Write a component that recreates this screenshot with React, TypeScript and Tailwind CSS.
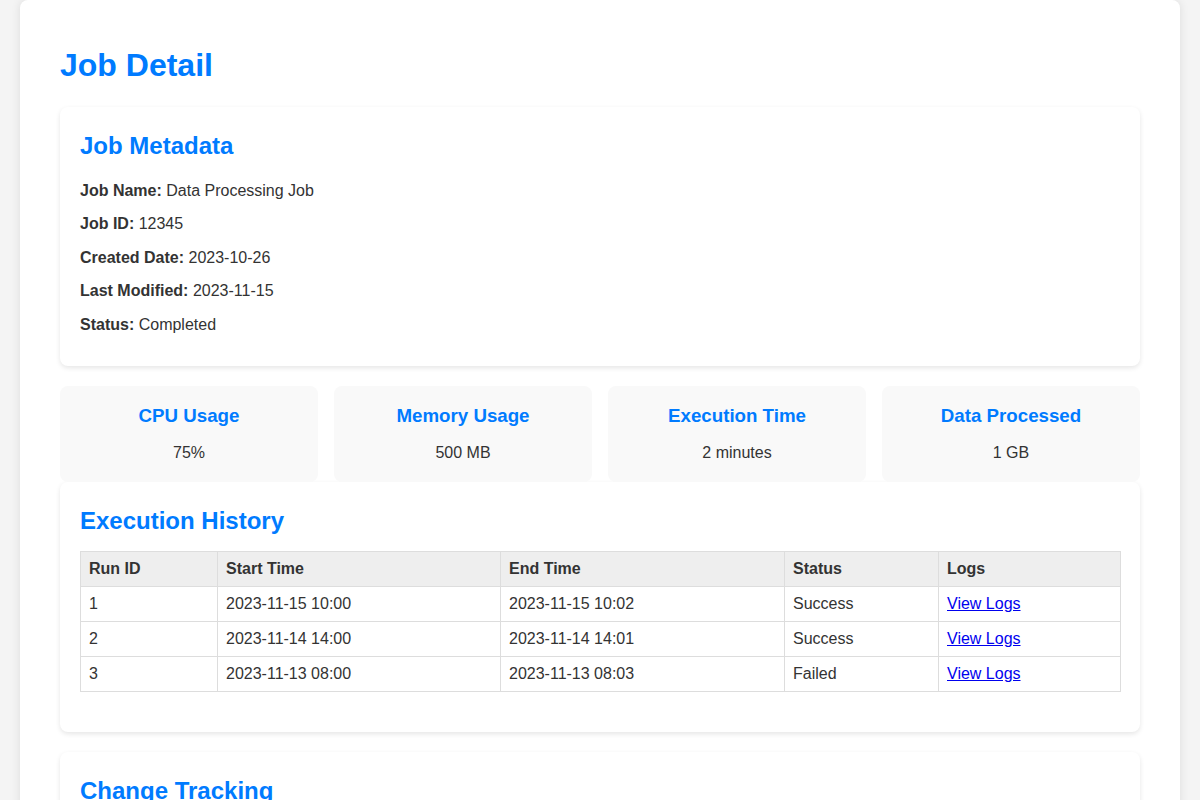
import React from "react";

const meta = [
  ["Job Name:", "Data Processing Job"],
  ["Job ID:", "12345"],
  ["Created Date:", "2023-10-26"],
  ["Last Modified:", "2023-11-15"],
  ["Status:", "Completed"],
];

const metrics = [
  ["CPU Usage", "75%"],
  ["Memory Usage", "500 MB"],
  ["Execution Time", "2 minutes"],
  ["Data Processed", "1 GB"],
];

const runs = [
  ["1", "2023-11-15 10:00", "2023-11-15 10:02", "Success"],
  ["2", "2023-11-14 14:00", "2023-11-14 14:01", "Success"],
  ["3", "2023-11-13 08:00", "2023-11-13 08:03", "Failed"],
];

export default function App() {
  return (
    <div
      className="min-h-screen bg-[#f4f4f4] px-5 text-[#333] leading-[1.6]"
      style={{ fontFamily: '"Liberation Sans", Arial, sans-serif' }}
    >
      <div className="bg-white rounded-lg p-10 shadow-[0_0_10px_rgba(0,0,0,0.1)]">
        <h1 className="text-[32px] font-bold text-[#007bff] mb-4 leading-[1.6]">Job Detail</h1>

        <section className="bg-white rounded-lg p-5 shadow-[0_2px_5px_rgba(0,0,0,0.1)] mb-5">
          <h2 className="text-[24px] font-bold text-[#007bff] mb-3 leading-[1.6]">Job Metadata</h2>
          <div className="flex flex-col gap-2 pb-2">
            {meta.map(([k, v]) => (
              <p key={k} className="text-[16px] leading-[25.6px]">
                <strong className="font-bold">{k}</strong> {v}
              </p>
            ))}
          </div>
        </section>

        <div className="grid grid-cols-4 gap-4">
          {metrics.map(([t, v]) => (
            <div key={t} className="bg-[#f9f9f9] rounded-lg px-4 pt-[15px] pb-[17px] text-center">
              <h3 className="text-[18.72px] font-bold text-[#007bff] leading-[30px] mb-[9px]">{t}</h3>
              <p className="text-[16px] leading-[25.6px]">{v}</p>
            </div>
          ))}
        </div>

        <section className="bg-white rounded-lg p-5 shadow-[0_2px_5px_rgba(0,0,0,0.1)] mb-5">
          <h2 className="text-[24px] font-bold text-[#007bff] mb-[10px] leading-[1.6]">Execution History</h2>
          <table className="w-full border-collapse table-fixed text-[16px] leading-[18px] mb-5">
            <colgroup>
              <col className="w-[137px]" />
              <col className="w-[283px]" />
              <col className="w-[284px]" />
              <col className="w-[154px]" />
              <col className="w-[182px]" />
            </colgroup>
            <thead>
              <tr className="bg-[#eeeeee]">
                {["Run ID", "Start Time", "End Time", "Status", "Logs"].map((h) => (
                  <th key={h} className="border border-[#dddddd] p-2 text-left font-bold">
                    {h}
                  </th>
                ))}
              </tr>
            </thead>
            <tbody>
              {runs.map((r) => (
                <tr key={r[0]}>
                  {r.map((c, i) => (
                    <td key={i} className="border border-[#dddddd] p-2">
                      {c}
                    </td>
                  ))}
                  <td className="border border-[#dddddd] p-2">
                    <a href="#" className="text-[#0000ee] underline">
                      View Logs
                    </a>
                  </td>
                </tr>
              ))}
            </tbody>
          </table>
        </section>

        <section className="bg-white rounded-lg p-5 shadow-[0_2px_5px_rgba(0,0,0,0.1)]">
          <h2 className="text-[24px] font-bold text-[#007bff] mb-3 leading-[1.6]">Change Tracking</h2>
          <div className="flex flex-col gap-2 pb-2">
            <p className="text-[16px] leading-[25.6px]">
              <strong className="font-bold">2023-11-15:</strong> Updated input data source.
            </p>
            <p className="text-[16px] leading-[25.6px]">
              <strong className="font-bold">2023-11-01:</strong> Increased memory allocation.
            </p>
          </div>
        </section>
      </div>
    </div>
  );
}
